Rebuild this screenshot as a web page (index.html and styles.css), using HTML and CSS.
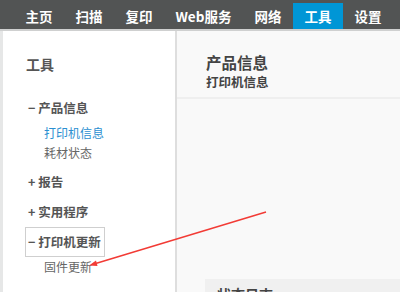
FILE: index.html
```html
<!DOCTYPE html>
<html lang="zh-CN">
<head>
    <meta charset="UTF-8">
    <title>工具 - 打印机更新</title>
    <link rel="stylesheet" href="styles.css">
</head>
<body>
    <nav class="topnav">
        <a href="#" class="nav-item">主页</a>
        <a href="#" class="nav-item">扫描</a>
        <a href="#" class="nav-item">复印</a>
        <a href="#" class="nav-item">Web服务</a>
        <a href="#" class="nav-item">网络</a>
        <a href="#" class="nav-item active">工具</a>
        <a href="#" class="nav-item">设置</a>
    </nav>

    <div class="main">
        <div class="edge"></div>

        <aside class="sidebar">
            <h2 class="side-title">工具</h2>

            <div class="group">
                <div class="group-head">− 产品信息</div>
                <ul class="group-items">
                    <li class="current">打印机信息</li>
                    <li>耗材状态</li>
                </ul>
            </div>

            <div class="group">
                <div class="group-head">+ 报告</div>
            </div>

            <div class="group">
                <div class="group-head">+ 实用程序</div>
            </div>

            <div class="group">
                <div class="group-head focused">− 打印机更新</div>
                <ul class="group-items">
                    <li>固件更新</li>
                </ul>
            </div>
        </aside>

        <section class="content">
            <header class="content-head">
                <h1>产品信息</h1>
                <h3>打印机信息</h3>
            </header>
            <div class="content-body">
                <div class="panel">
                    <div class="panel-title">状态日志</div>
                </div>
            </div>
        </section>
    </div>

    <!-- annotation arrow drawn on top of the screenshot -->
    <svg class="arrow" width="400" height="292" viewBox="0 0 400 292">
        <line x1="266" y1="212" x2="94" y2="264" stroke="#f23b35" stroke-width="1.5"/>
        <polygon points="89,265.5 96,260.5 97.5,266" fill="#f23b35"/>
    </svg>
</body>
</html>
```

FILE: styles.css
```css
* {
    margin: 0;
    padding: 0;
    box-sizing: border-box;
}

body {
    font-family: "Noto Sans CJK SC", sans-serif;
    height: 100vh;
    overflow: hidden;
    display: flex;
    flex-direction: column;
    position: relative;
    background: #f9f9f9;
}

.topnav {
    background: #525454;
    height: 31px;
    padding: 3px 0 0 14px;
    border-bottom: 2px solid #cfd0d0;
    display: flex;
}

.nav-item {
    color: white;
    text-decoration: none;
    font-size: 13.5px;
    font-weight: 700;
    line-height: 26px;
    padding: 0 11.5px;
    white-space: nowrap;
}

.nav-item.active {
    background: #0096d6;
}

.main {
    flex: 1;
    display: flex;
}

.edge {
    width: 3px;
    background: #e6e7e7;
}

.sidebar {
    width: 174px;
    background: white;
    border-right: 2px solid #dedede;
    padding: 23px 0 0 22px;
}

.side-title {
    font-size: 14px;
    font-weight: 700;
    color: #555;
    line-height: 20px;
    padding-left: 1px;
    margin-bottom: 19px;
}

.group-head {
    display: inline-block;
    font-size: 12.5px;
    font-weight: 700;
    color: #555;
    line-height: 28px;
    padding: 0 3px 0 2px;
    border: 1px solid transparent;
}

.group-head.focused {
    border-color: #cfcfcf;
}

.group-items {
    list-style: none;
    margin-bottom: 4px;
}

.group-items li {
    font-size: 12px;
    line-height: 20px;
    color: #666;
    padding-left: 19px;
}

.group-items li.current {
    color: #2b8fd1;
}

.content {
    flex: 1;
    background: #f9f9f9;
}

.content-head {
    padding: 21px 0 6px 29px;
    border-bottom: 2px solid #efefef;
    color: #444;
}

.content-head h1 {
    font-size: 15.5px;
    font-weight: 700;
    line-height: 20px;
    margin-bottom: 1px;
}

.content-head h3 {
    font-size: 12.5px;
    font-weight: 700;
    line-height: 18px;
}

.content-body {
    padding: 180px 0 0 28px;
}

.panel {
    background: #f0f0f0;
    padding: 5px 12px;
}

.panel-title {
    font-size: 14px;
    font-weight: 700;
    color: #444;
    line-height: 20px;
}

.arrow {
    position: absolute;
    top: 0;
    left: 0;
    pointer-events: none;
}
```
